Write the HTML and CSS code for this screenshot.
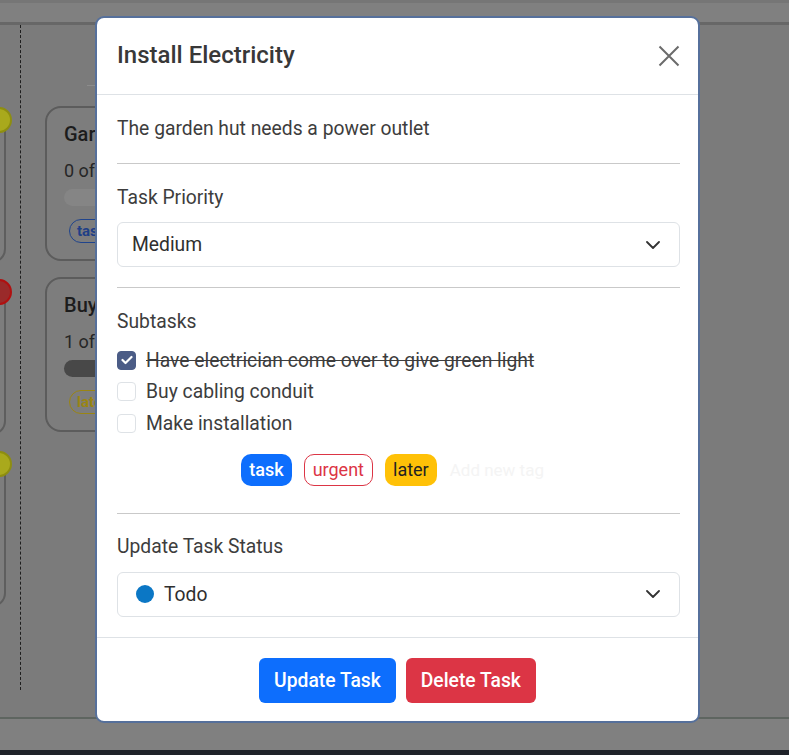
FILE: index.html
```html
<!DOCTYPE html>
<html lang="en">
<head>
<meta charset="utf-8">
<title>Install Electricity</title>
<link rel="stylesheet" href="styles.css">
</head>
<body>
<div class="page">
  <div class="topbar"></div>
  <div class="board">
    <div class="col col-left">
      <div class="lcard lc1"><span class="dot dot-yellow"></span></div>
      <div class="lcard lc2"><span class="dot dot-red"></span></div>
      <div class="lcard lc3"><span class="dot dot-yellow"></span></div>
    </div>
    <div class="divider"></div>
    <div class="col col-main">
      <div class="col-head"></div>
      <div class="card">
        <div class="card-title">Garden hut</div>
        <div class="card-meta">0 of 3 subtasks</div>
        <div class="bar bar-light"></div>
        <div class="card-tags"><span class="ctag ctag-blue">task</span></div>
      </div>
      <div class="card">
        <div class="card-title">Buy seeds</div>
        <div class="card-meta">1 of 2 subtasks</div>
        <div class="bar bar-dark"></div>
        <div class="card-tags"><span class="ctag ctag-yellow">later</span></div>
      </div>
    </div>
  </div>
  <div class="bottombar"></div>
  <div class="footerbar"></div>
</div>

<div class="modal">
  <div class="modal-header">
    <h2 class="modal-title">Install Electricity</h2>
    <button class="close" aria-label="Close">
      <svg width="22" height="22" viewBox="0 0 22 22"><path d="M1.5 1.5 L20.5 20.5 M20.5 1.5 L1.5 20.5" stroke="#6b6b6b" stroke-width="2" fill="none"/></svg>
    </button>
  </div>
  <div class="modal-body">
    <p class="desc">The garden hut needs a power outlet</p>
    <hr class="sep">
    <div class="label">Task Priority</div>
    <div class="select">
      <span class="select-value">Medium</span>
      <svg class="chev" width="14" height="8" viewBox="0 0 14 8"><path d="M1 1 L7 7 L13 1" stroke="#333" stroke-width="1.8" fill="none" stroke-linecap="round" stroke-linejoin="round"/></svg>
    </div>
    <hr class="sep sep-after-select">
    <div class="label">Subtasks</div>
    <ul class="subtasks">
      <li class="subtask done"><span class="cb cb-checked"><svg width="12" height="10" viewBox="0 0 12 10"><path d="M1.5 5 L4.5 8 L10.5 2" stroke="#fff" stroke-width="2.2" fill="none" stroke-linecap="round" stroke-linejoin="round"/></svg></span><span class="st-text">Have electrician come over to give green light</span></li>
      <li class="subtask"><span class="cb"></span><span class="st-text">Buy cabling conduit</span></li>
      <li class="subtask"><span class="cb"></span><span class="st-text">Make installation</span></li>
    </ul>
    <div class="tags">
      <span class="tag tag-task">task</span>
      <span class="tag tag-urgent">urgent</span>
      <span class="tag tag-later">later</span>
      <span class="tag-add">Add new tag</span>
    </div>
    <hr class="sep sep-tags">
    <div class="label">Update Task Status</div>
    <div class="select">
      <span class="select-value"><span class="status-dot"></span>Todo</span>
      <svg class="chev" width="14" height="8" viewBox="0 0 14 8"><path d="M1 1 L7 7 L13 1" stroke="#333" stroke-width="1.8" fill="none" stroke-linecap="round" stroke-linejoin="round"/></svg>
    </div>
  </div>
  <div class="modal-footer">
    <button class="btn btn-primary">Update Task</button>
    <button class="btn btn-danger">Delete Task</button>
  </div>
</div>
</body>
</html>
```

FILE: styles.css
```css
* { box-sizing: border-box; }
html, body { margin: 0; padding: 0; }
body {
  width: 789px;
  height: 755px;
  overflow: hidden;
  background: #808080;
  font-family: Roboto, "Liberation Sans", sans-serif;
}

/* background page (already dimmed) */
.page {
  display: flex;
  flex-direction: column;
  height: 755px;
}
.topbar {
  height: 25px;
  background: #808080;
  border-top: 3px solid #767676;
  border-bottom: 3px solid #676767;
}
.board {
  height: 692px;
  background: #7b7b7b;
  display: flex;
  align-items: stretch;
}
.col-left {
  width: 60px;
  margin-left: -54px;
  padding-top: 86px;
  display: flex;
  flex-direction: column;
  gap: 20px;
}
.lcard {
  position: relative;
  height: 152px;
  border: 2px solid #5e5e5e;
  border-radius: 14px;
  background: #7d7d7d;
}
.lcard .dot {
  position: absolute;
  right: -8px;
  top: -6px;
  width: 26px;
  height: 26px;
  border-radius: 50%;
  border: 2px solid;
}
.dot-yellow { background: #a9a91c; border-color: #8e8e10 !important; }
.dot-red { background: #9a2a2a; border-color: #b01010 !important; }

.divider {
  width: 0;
  margin-left: 14px;
  margin-bottom: 27px;
  border-left: 1px dashed #1e1e1e;
}
.col-main {
  margin-left: 24px;
  width: 300px;
  display: flex;
  flex-direction: column;
  gap: 16px;
  padding-top: 60px;
}
.col-head {
  height: 1px;
  width: 60px;
  margin-left: 42px;
  margin-bottom: 4px;
  background: #8c8c8c;
}
.card {
  border: 2px solid #5c5c5c;
  border-radius: 16px;
  background: #7d7d7d;
  padding: 15px 17px 16px;
  color: #1c1c1c;
}
.card-title { font-size: 20px; font-weight: 500; line-height: 22px; }
.card-meta { font-size: 18px; line-height: 22px; margin-top: 15px; color: #262626; }
.bar { height: 17px; border-radius: 9px; margin-top: 7px; }
.bar-light { background: #858585; }
.bar-dark { background: #484848; }
.card-tags { margin-top: 13px; display: flex; }
.ctag {
  height: 24px;
  line-height: 22px;
  padding: 0 7px;
  border-radius: 12px;
  border: 1px solid;
  font-size: 15px;
  font-weight: 700;
  margin-left: 5px;
}
.ctag-blue { border-color: #20448c; color: #1f3f86; }
.ctag-yellow { border-color: #9a8512; color: #9a8512; }

.bottombar {
  height: 33px;
  background: #808080;
  border-top: 2px solid #5e6560;
}
.footerbar {
  height: 5px;
  background: #1f2229;
}

/* modal */
.modal {
  position: fixed;
  left: 95px;
  top: 16px;
  width: 605px;
  background: #fff;
  border: 2px solid #56709b;
  border-radius: 9px;
  color: #3d3d3d;
}
.modal-header {
  display: flex;
  align-items: center;
  justify-content: space-between;
  padding: 20px 18px 21px 20px;
  border-bottom: 1px solid #dee2e6;
}
.modal-title {
  margin: 0;
  font-size: 24px;
  line-height: 35px;
  font-weight: 500;
  color: #383838;
}
.close {
  border: 0;
  background: none;
  padding: 0;
  width: 22px;
  height: 22px;
  display: flex;
}
.modal-body {
  padding: 18.5px 18px 20px 20px;
  font-size: 19.3px;
}
.desc {
  margin: 0;
  line-height: 29px;
}
.sep {
  border: 0;
  border-top: 1px solid #c9c9c9;
  margin: 20.5px 0 18.5px;
}
.sep-after-select { margin-top: 20px; }
.label {
  line-height: 29px;
}
.select {
  margin-top: 10.5px;
  height: 45px;
  border: 1px solid #dee2e6;
  border-radius: 6px;
  display: flex;
  align-items: center;
  justify-content: space-between;
  padding: 0 19px 0 14px;
  color: #2f2f2f;
}
.select-value { display: flex; align-items: center; }
.status-dot {
  width: 18px;
  height: 18px;
  border-radius: 50%;
  background: #0b77c5;
  margin: 0 10px 0 4px;
}
.subtasks {
  list-style: none;
  margin: 8.75px 0 0;
  padding: 0;
}
.subtask {
  display: flex;
  align-items: center;
  height: 31.5px;
}
.cb {
  width: 19px;
  height: 19px;
  border: 1px solid #dee2e6;
  border-radius: 4px;
  margin-right: 10px;
  display: flex;
  align-items: center;
  justify-content: center;
}
.cb-checked {
  background: #4b5c86;
  border-color: #4b5c86;
}
.done .st-text { text-decoration: line-through; }

.tags {
  margin-top: 15px;
  display: flex;
  justify-content: center;
  align-items: center;
  gap: 12px;
}
.tag {
  height: 32px;
  line-height: 30px;
  padding: 0 8px;
  border-radius: 10px;
  border: 1px solid transparent;
  font-size: 18px;
}
.tag-task { background: #0d6efd; color: #fff; font-weight: 500; padding: 0 7px; }
.tag-urgent { border-color: #dc3545; color: #dc3545; }
.tag-later { background: #ffc107; color: #222; padding: 0 7px; }
.tag-add { font-size: 17px; color: #f4f4f4; width: 106px; margin-left: 1px; white-space: nowrap; }
.sep-tags { margin-top: 27px; }

.modal-footer {
  border-top: 1px solid #dee2e6;
  padding: 20px 20px 18px;
  display: flex;
  justify-content: center;
  gap: 10px;
}
.btn {
  height: 45px;
  border: 0;
  border-radius: 6px;
  padding: 0 15px;
  font-family: Roboto, "Liberation Sans", sans-serif;
  font-size: 19.3px;
  font-weight: 500;
  color: #fff;
}
.btn-primary { background: #0d6efd; }
.btn-danger { background: #dc3545; }
```
